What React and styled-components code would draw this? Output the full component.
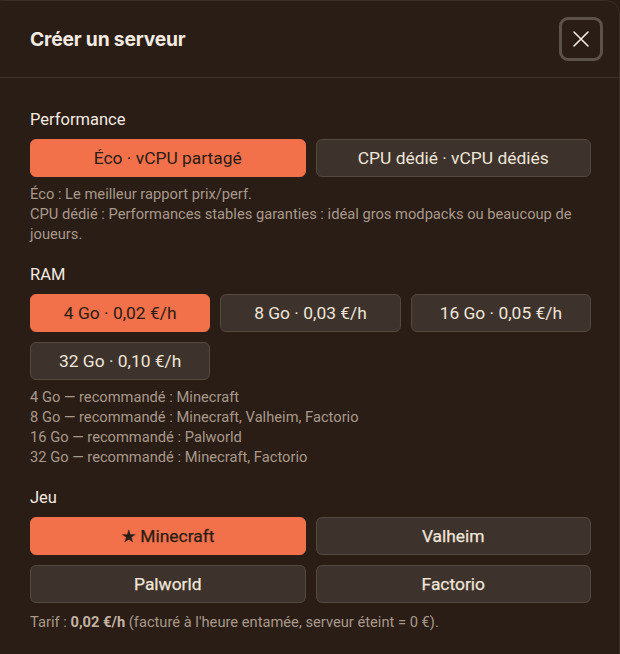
import React, { useState } from 'react';
import styled, { createGlobalStyle } from 'styled-components';

const Global = createGlobalStyle`
  html, body {
    margin: 0;
    background: #2a1d15;
    overflow: hidden;
  }
  * { box-sizing: border-box; }
`;

const colors = {
  bg: '#2a1d15',
  line: '#3d3128',
  accent: '#f2704a',
  chip: '#3e332c',
  chipBorder: '#54483f',
  text: '#f3ebe1',
  muted: '#a8998b',
};

const Modal = styled.div`
  width: calc(100% + 12px);
  margin-left: -12px;
  min-height: 680px;
  background: ${colors.bg};
  border: 1px solid #3a2e26;
  border-radius: 14px;
  font-family: Roboto, 'Liberation Sans', sans-serif;
`;

const Header = styled.header`
  display: flex;
  align-items: center;
  justify-content: space-between;
  height: 77px;
  padding: 0 16px 0 41px;
  border-bottom: 1px solid ${colors.line};
`;

const Title = styled.h2`
  margin: 0;
  font-family: Inter, Roboto, sans-serif;
  font-size: 19.3px;
  font-weight: 700;
  letter-spacing: -0.2px;
  color: ${colors.text};
`;

const CloseButton = styled.button`
  display: flex;
  align-items: center;
  justify-content: center;
  width: 44px;
  height: 44px;
  padding: 0;
  background: transparent;
  border: 3px solid #5d5249;
  border-radius: 9px;
  color: #f3ebe1;
  cursor: pointer;
`;

const Body = styled.div`
  display: flex;
  flex-direction: column;
  gap: 20px;
  padding: 31px 28px 30px 41px;
`;

const Section = styled.section`
  display: flex;
  flex-direction: column;
`;

const Label = styled.div`
  font-size: 16.5px;
  line-height: 22px;
  color: ${colors.text};
  margin-bottom: 8px;
`;

const Options = styled.div`
  display: grid;
  grid-template-columns: repeat(${(p) => p.$cols}, 1fr);
  gap: 10px;
`;

const Option = styled.button`
  height: 38px;
  padding: 0 10px;
  border-radius: 6px;
  border: 1px solid ${(p) => (p.$active ? colors.accent : colors.chipBorder)};
  background: ${(p) => (p.$active ? colors.accent : colors.chip)};
  color: ${(p) => (p.$active ? '#2a1d15' : '#efe5d9')};
  font-family: Roboto, 'Liberation Sans', sans-serif;
  font-size: 17.4px;
  font-weight: 400;
  -webkit-text-stroke: ${(p) => (p.$medium ? '0.25px currentColor' : '0')};
  white-space: nowrap;
  cursor: pointer;
`;

const Hint = styled.div`
  margin-top: ${(p) => p.$mt || 7}px;
  font-size: 14.7px;
  line-height: 20px;
  color: ${colors.muted};

  b {
    font-weight: 700;
    color: #c2b3a3;
  }
`;

const CloseIcon = () => (
  <svg width="18" height="18" viewBox="0 0 18 18" fill="none">
    <path d="M2 2L16 16M16 2L2 16" stroke="currentColor" strokeWidth="1.6" strokeLinecap="round" />
  </svg>
);

const perfOptions = ['Éco · vCPU partagé', 'CPU dédié · vCPU dédiés'];
const ramOptions = [
  ['4 Go', '0,02 €/h'],
  ['8 Go', '0,03 €/h'],
  ['16 Go', '0,05 €/h'],
  ['32 Go', '0,10 €/h'],
];
const ramHints = [
  '4 Go — recommandé : Minecraft',
  '8 Go — recommandé : Minecraft, Valheim, Factorio',
  '16 Go — recommandé : Palworld',
  '32 Go — recommandé : Minecraft, Factorio',
];
const games = ['Minecraft', 'Valheim', 'Palworld', 'Factorio'];

export default function App() {
  const [perf, setPerf] = useState(0);
  const [ram, setRam] = useState(0);
  const [game, setGame] = useState(0);

  return (
    <>
      <Global />
      <Modal>
        <Header>
          <Title>Créer un serveur</Title>
          <CloseButton aria-label="Fermer">
            <CloseIcon />
          </CloseButton>
        </Header>

        <Body>
          <Section>
            <Label>Performance</Label>
            <Options $cols={2}>
              {perfOptions.map((o, i) => (
                <Option key={o} $active={perf === i} onClick={() => setPerf(i)}>
                  {o}
                </Option>
              ))}
            </Options>
            <Hint>
              Éco : Le meilleur rapport prix/perf.
              <br />
              CPU dédié : Performances stables garanties : idéal gros modpacks ou beaucoup de joueurs.
            </Hint>
          </Section>

          <Section>
            <Label>RAM</Label>
            <Options $cols={3}>
              {ramOptions.map(([size, price], i) => (
                <Option key={size} $active={ram === i} onClick={() => setRam(i)}>
                  {size} · {price}
                </Option>
              ))}
            </Options>
            <Hint>
              {ramHints.map((h) => (
                <div key={h}>{h}</div>
              ))}
            </Hint>
          </Section>

          <Section>
            <Label>Jeu</Label>
            <Options $cols={2}>
              {games.map((g, i) => (
                <Option key={g} $medium $active={game === i} onClick={() => setGame(i)}>
                  {game === i ? '★ ' : ''}
                  {g}
                </Option>
              ))}
            </Options>
            <Hint $mt={9}>
              Tarif : <b>{ramOptions[ram][1]}</b> (facturé à l'heure entamée, serveur éteint = 0 €).
            </Hint>
          </Section>
        </Body>
      </Modal>
    </>
  );
}
